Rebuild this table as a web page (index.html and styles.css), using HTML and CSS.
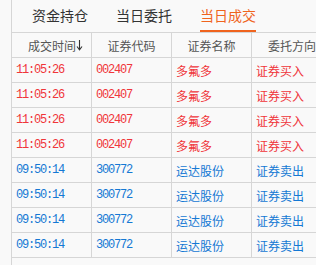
FILE: index.html
```html
<!DOCTYPE html>
<html>
<head>
<meta charset="utf-8">
<link rel="stylesheet" href="styles.css">
</head>
<body>
<div class="panel">
  <div class="tabs">
    <div class="tab">资金持仓</div>
    <div class="tab">当日委托</div>
    <div class="tab active">当日成交</div>
  </div>
  <div class="grid">
    <div class="row head">
      <div class="cell first">成交时间<svg class="arrow" width="7" height="12" viewBox="0 0 7 12"><path d="M3.5 1V10.5M1 7.5L3.5 10.8L6 7.5" fill="none" stroke="#333" stroke-width="1.1"/></svg></div>
      <div class="cell">证券代码</div>
      <div class="cell">证券名称</div>
      <div class="cell last">委托方向</div>
    </div>
    <div class="row buy"><div class="cell num">11:05:26</div><div class="cell num">002407</div><div class="cell">多氟多</div><div class="cell last">证券买入</div></div>
    <div class="row buy"><div class="cell num">11:05:26</div><div class="cell num">002407</div><div class="cell">多氟多</div><div class="cell last">证券买入</div></div>
    <div class="row buy"><div class="cell num">11:05:26</div><div class="cell num">002407</div><div class="cell">多氟多</div><div class="cell last">证券买入</div></div>
    <div class="row buy"><div class="cell num">11:05:26</div><div class="cell num">002407</div><div class="cell">多氟多</div><div class="cell last">证券买入</div></div>
    <div class="row sell"><div class="cell num">09:50:14</div><div class="cell num">300772</div><div class="cell">运达股份</div><div class="cell last">证券卖出</div></div>
    <div class="row sell"><div class="cell num">09:50:14</div><div class="cell num">300772</div><div class="cell">运达股份</div><div class="cell last">证券卖出</div></div>
    <div class="row sell"><div class="cell num">09:50:14</div><div class="cell num">300772</div><div class="cell">运达股份</div><div class="cell last">证券卖出</div></div>
    <div class="row sell"><div class="cell num">09:50:14</div><div class="cell num">300772</div><div class="cell">运达股份</div><div class="cell last">证券卖出</div></div>
  </div>
</div>
</body>
</html>
```
FILE: styles.css
```css
html, body {
  margin: 0;
  padding: 0;
  background: #f9f9f9;
  overflow: hidden;
  width: 316px;
  height: 265px;
}
body {
  font-family: "Noto Sans CJK SC", "Liberation Sans", sans-serif;
  font-size: 12px;
}
.panel {
  margin-left: 11px;
  border-left: 1px solid #d6d6d6;
  height: 265px;
  box-sizing: border-box;
  overflow: hidden;
}
.tabs {
  display: flex;
  height: 32px;
  padding-left: 20px;
  gap: 28px;
  box-sizing: border-box;
}
.tab {
  font-size: 14px;
  line-height: 30px;
  height: 30px;
  color: #333;
  border-bottom: 2px solid transparent;
}
.tab.active {
  color: #f0641e;
  border-bottom-color: #f0641e;
}
.grid {
  display: flex;
  flex-direction: column;
}
.row {
  display: grid;
  grid-template-columns: 80px 80px 80px 1fr;
  height: 25px;
  box-sizing: border-box;
  border-bottom: 1px solid #d6d6d6;
}
.row.head {
  height: 26px;
  border-top: 1px solid #d6d6d6;
  color: #555;
}
.cell {
  display: flex;
  align-items: center;
  padding-left: 4px;
  border-right: 1px solid #d6d6d6;
  white-space: nowrap;
  overflow: hidden;
}
.cell.last {
  border-right: none;
}
.head .cell {
  justify-content: center;
  padding-left: 0;
}
.head .cell.first {
  justify-content: flex-end;
  padding-right: 8px;
}
.head .cell.last {
  justify-content: flex-start;
  padding-left: 16px;
}
.num {
  font-family: "Liberation Mono", monospace;
  letter-spacing: -1.2px;
}
.buy { color: #f0353a; }
.sell { color: #1478d4; }
```
